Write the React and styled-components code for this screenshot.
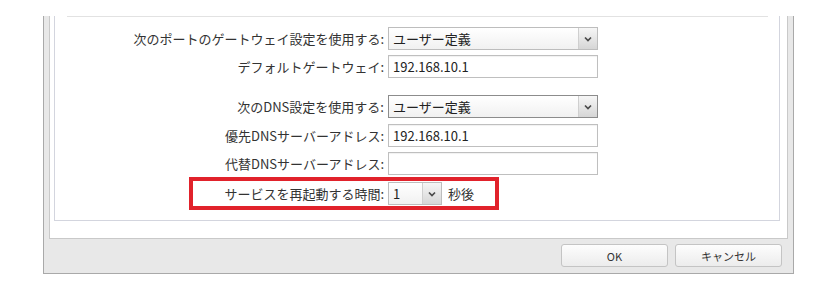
import React from 'react';
import styled, { createGlobalStyle } from 'styled-components';

const GlobalStyle = createGlobalStyle`
  body {
    margin: 0;
    background: #ffffff;
    font-family: "Noto Sans CJK JP", "Noto Sans", sans-serif;
    color: #333333;
  }
`;

const Page = styled.div`
  padding-left: 43px;
`;

const Dialog = styled.div`
  width: 751px;
  box-sizing: border-box;
  background-color: #e8e8e8;
  border: 1px solid #a9a9a9;
  border-top: none;
  padding: 0 5px;
`;

const ContentPanel = styled.div`
  background-color: #ffffff;
  border: 1px solid #c9c9c9;
  border-top: none;
  padding: 0 7px 17px 4px;
`;

const FieldSet = styled.div`
  border: 1px solid #d3d5de;
  border-top: none;
  padding: 0 11px 15px 12px;
`;

const Separator = styled.div`
  height: 1px;
  margin-top: 16px;
  background-color: #e2e2e2;
`;

const Form = styled.div`
  padding-top: 10px;
`;

const Row = styled.div`
  position: relative;
  display: flex;
  align-items: center;
  height: 23px;
  margin-top: ${(p) => p.$gap || 0}px;
`;

const Label = styled.div`
  width: 317px;
  margin-right: 4px;
  text-align: right;
  font-size: 13px;
  color: #333333;
  white-space: nowrap;
`;

const TextInput = styled.div`
  width: 210px;
  height: 23px;
  box-sizing: border-box;
  border: 1px solid #bfbfbf;
  box-shadow: inset 0 1px 1px rgba(0, 0, 0, 0.06);
  background-color: #ffffff;
  padding-left: 4px;
  display: flex;
  align-items: center;
  font-size: 13px;
  color: #222222;
`;

const Select = styled.div`
  width: ${(p) => p.$width || 210}px;
  height: 23px;
  box-sizing: border-box;
  border: 1px solid ${(p) => (p.$focused ? '#8c8c8c' : '#bdbdbd')};
  background: linear-gradient(#ffffff, #f1f1f1);
  display: flex;
  align-items: stretch;
`;

const SelectValue = styled.div`
  flex: 1;
  padding-left: 4px;
  display: flex;
  align-items: center;
  font-size: 13px;
  color: #222222;
`;

const ArrowButton = styled.div`
  width: 18px;
  border-left: 1px solid #cfcfcf;
  background: linear-gradient(#f6f6f6, #d6d6d6);
  display: flex;
  align-items: center;
  justify-content: center;
`;

const Unit = styled.span`
  margin-left: 6px;
  font-size: 13px;
  color: #333333;
`;

const Highlight = styled.div`
  position: absolute;
  left: 122px;
  top: -5px;
  width: 310px;
  height: 33px;
  box-sizing: border-box;
  border: 4px solid #e1222b;
  pointer-events: none;
`;

const Footer = styled.div`
  display: flex;
  justify-content: flex-end;
  gap: 7px;
  padding: 5px 6px 6px 0;
`;

const Button = styled.button`
  width: 107px;
  height: 23px;
  border: 1px solid #c4c4c4;
  border-radius: 3px;
  background: linear-gradient(#fdfdfd, #ececec);
  font-family: "Noto Sans CJK JP", "Noto Sans", sans-serif;
  font-size: 11px;
  color: #333333;
  padding: 0;
`;

function Chevron() {
  return (
    <svg width="8" height="6" viewBox="0 0 8 6">
      <polyline points="1,1.5 4,4.5 7,1.5" fill="none" stroke="#4a4a4a" strokeWidth="1.7" />
    </svg>
  );
}

function Dropdown({ value, width, focused }) {
  return (
    <Select $width={width} $focused={focused}>
      <SelectValue>{value}</SelectValue>
      <ArrowButton>
        <Chevron />
      </ArrowButton>
    </Select>
  );
}

export default function App() {
  return (
    <Page>
      <GlobalStyle />
      <Dialog>
        <ContentPanel>
          <FieldSet>
            <Separator />
            <Form>
              <Row>
                <Label>次のポートのゲートウェイ設定を使用する:</Label>
                <Dropdown value="ユーザー定義" />
              </Row>
              <Row $gap={5}>
                <Label>デフォルトゲートウェイ:</Label>
                <TextInput>192.168.10.1</TextInput>
              </Row>
              <Row $gap={17}>
                <Label>次のDNS設定を使用する:</Label>
                <Dropdown value="ユーザー定義" focused />
              </Row>
              <Row $gap={6}>
                <Label>優先DNSサーバーアドレス:</Label>
                <TextInput>192.168.10.1</TextInput>
              </Row>
              <Row $gap={5}>
                <Label>代替DNSサーバーアドレス:</Label>
                <TextInput />
              </Row>
              <Row $gap={7}>
                <Label>サービスを再起動する時間:</Label>
                <Dropdown value="1" width={54} />
                <Unit>秒後</Unit>
                <Highlight />
              </Row>
            </Form>
          </FieldSet>
        </ContentPanel>
        <Footer>
          <Button>OK</Button>
          <Button>キャンセル</Button>
        </Footer>
      </Dialog>
    </Page>
  );
}
